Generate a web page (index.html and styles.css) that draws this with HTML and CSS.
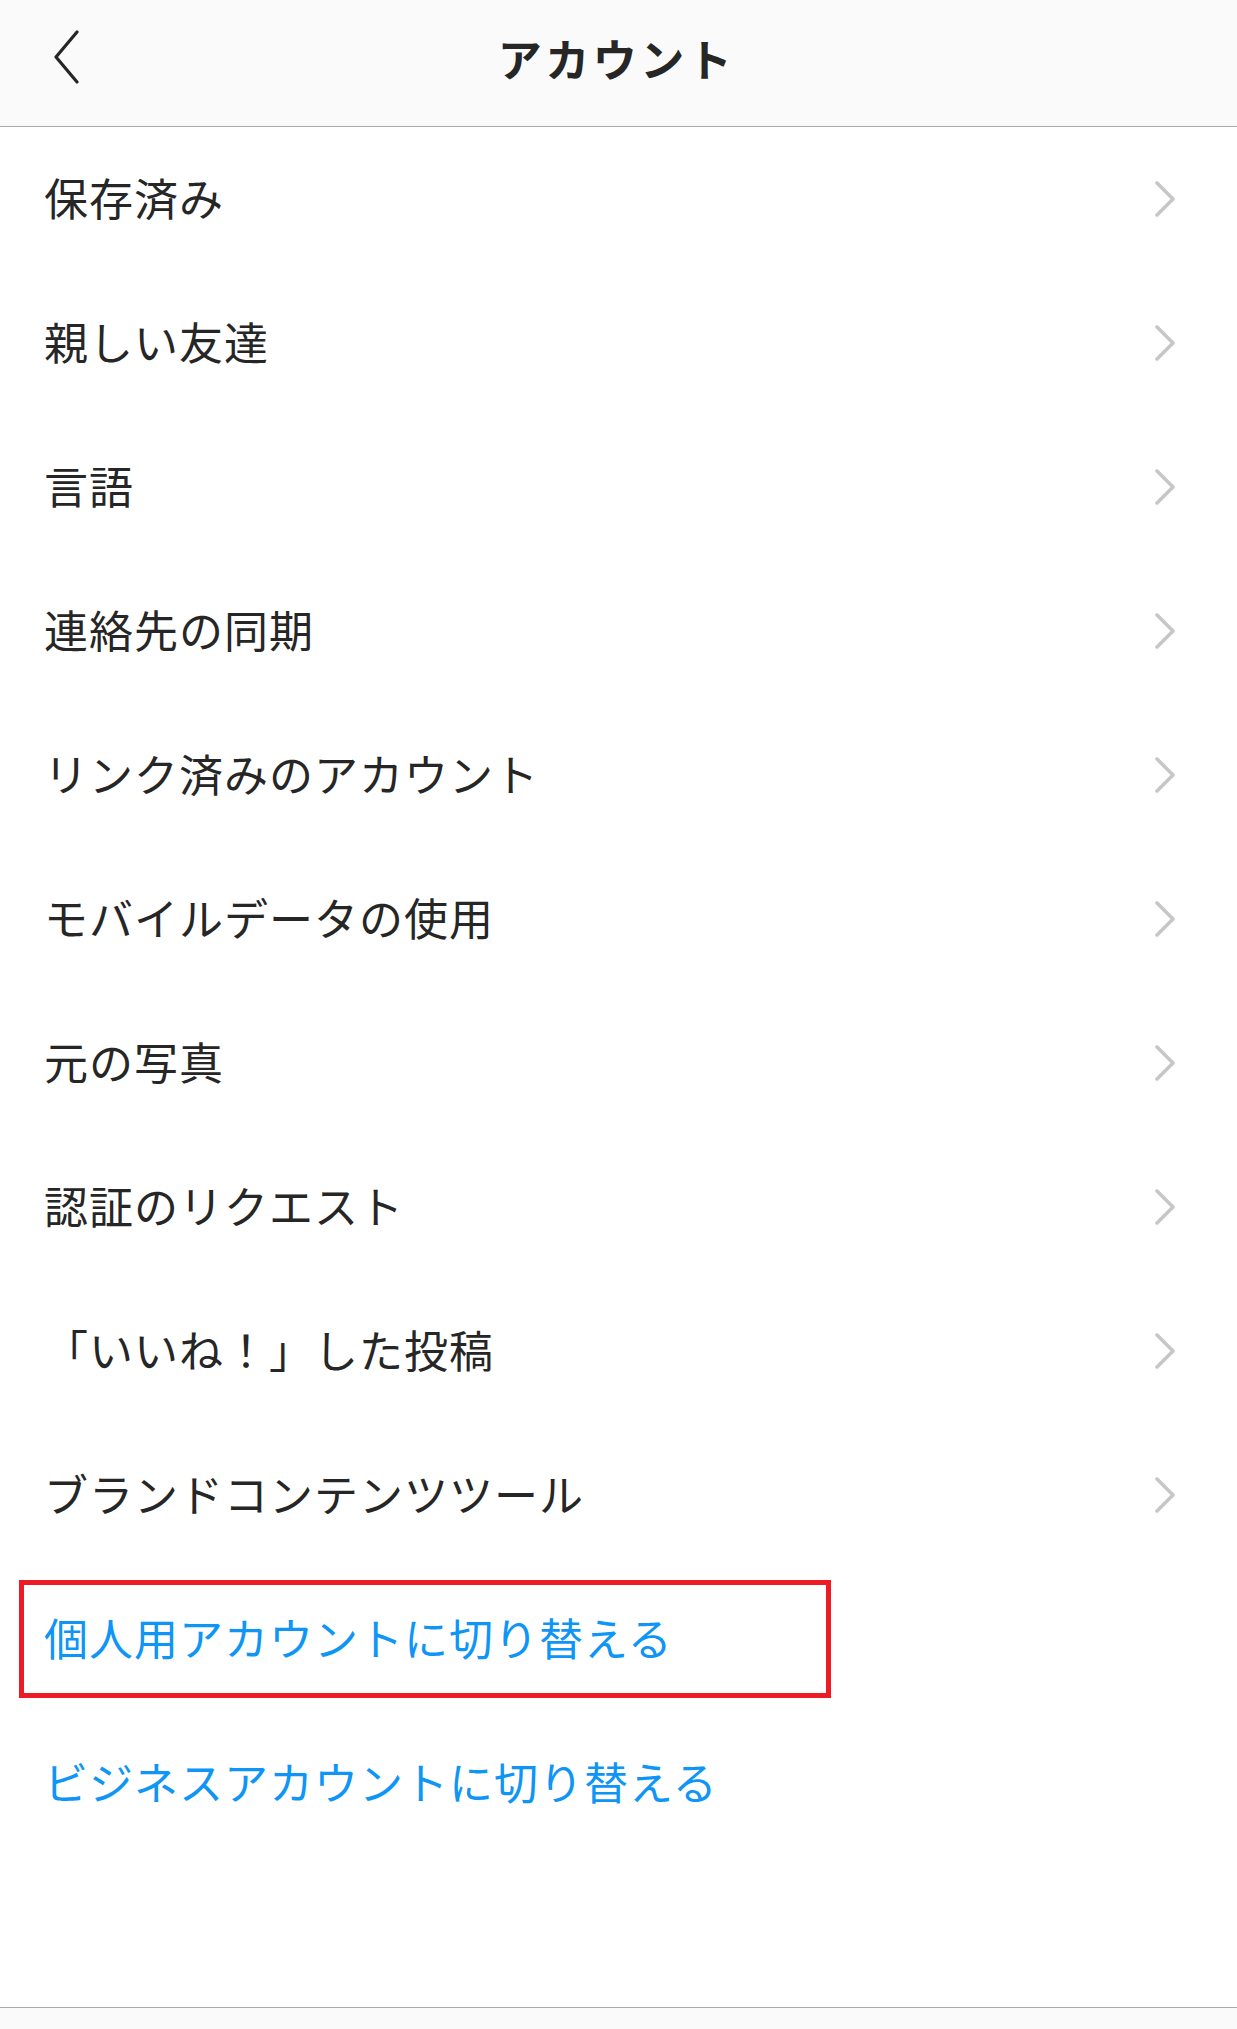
FILE: index.html
```html
<!DOCTYPE html>
<html lang="ja">
<head>
<meta charset="utf-8">
<title>アカウント</title>
<link rel="stylesheet" href="styles.css">
</head>
<body>
<div class="page">
  <header class="topbar">
    <span class="back">
      <svg width="26" height="54" viewBox="0 0 26 54"><path d="M24 2 L3 27 L24 52" fill="none" stroke="#262626" stroke-width="3.2" stroke-linecap="round" stroke-linejoin="round"/></svg>
    </span>
    <h1 class="title">アカウント</h1>
  </header>
  <main class="list">
    <div class="row"><span class="label">保存済み</span><svg class="chev" width="20" height="36" viewBox="0 0 20 36"><path d="M2 2 L18 18 L2 34" fill="none" stroke="#c7c7c7" stroke-width="3.6" stroke-linecap="round" stroke-linejoin="round"/></svg></div>
    <div class="row"><span class="label">親しい友達</span><svg class="chev" width="20" height="36" viewBox="0 0 20 36"><path d="M2 2 L18 18 L2 34" fill="none" stroke="#c7c7c7" stroke-width="3.6" stroke-linecap="round" stroke-linejoin="round"/></svg></div>
    <div class="row"><span class="label">言語</span><svg class="chev" width="20" height="36" viewBox="0 0 20 36"><path d="M2 2 L18 18 L2 34" fill="none" stroke="#c7c7c7" stroke-width="3.6" stroke-linecap="round" stroke-linejoin="round"/></svg></div>
    <div class="row"><span class="label">連絡先の同期</span><svg class="chev" width="20" height="36" viewBox="0 0 20 36"><path d="M2 2 L18 18 L2 34" fill="none" stroke="#c7c7c7" stroke-width="3.6" stroke-linecap="round" stroke-linejoin="round"/></svg></div>
    <div class="row"><span class="label">リンク済みのアカウント</span><svg class="chev" width="20" height="36" viewBox="0 0 20 36"><path d="M2 2 L18 18 L2 34" fill="none" stroke="#c7c7c7" stroke-width="3.6" stroke-linecap="round" stroke-linejoin="round"/></svg></div>
    <div class="row"><span class="label">モバイルデータの使用</span><svg class="chev" width="20" height="36" viewBox="0 0 20 36"><path d="M2 2 L18 18 L2 34" fill="none" stroke="#c7c7c7" stroke-width="3.6" stroke-linecap="round" stroke-linejoin="round"/></svg></div>
    <div class="row"><span class="label">元の写真</span><svg class="chev" width="20" height="36" viewBox="0 0 20 36"><path d="M2 2 L18 18 L2 34" fill="none" stroke="#c7c7c7" stroke-width="3.6" stroke-linecap="round" stroke-linejoin="round"/></svg></div>
    <div class="row"><span class="label">認証のリクエスト</span><svg class="chev" width="20" height="36" viewBox="0 0 20 36"><path d="M2 2 L18 18 L2 34" fill="none" stroke="#c7c7c7" stroke-width="3.6" stroke-linecap="round" stroke-linejoin="round"/></svg></div>
    <div class="row"><span class="label">「いいね！」した投稿</span><svg class="chev" width="20" height="36" viewBox="0 0 20 36"><path d="M2 2 L18 18 L2 34" fill="none" stroke="#c7c7c7" stroke-width="3.6" stroke-linecap="round" stroke-linejoin="round"/></svg></div>
    <div class="row"><span class="label">ブランドコンテンツツール</span><svg class="chev" width="20" height="36" viewBox="0 0 20 36"><path d="M2 2 L18 18 L2 34" fill="none" stroke="#c7c7c7" stroke-width="3.6" stroke-linecap="round" stroke-linejoin="round"/></svg></div>
    <div class="row highlighted"><span class="label link">個人用アカウントに切り替える</span><span class="mark"></span></div>
    <div class="row"><span class="label link">ビジネスアカウントに切り替える</span></div>
  </main>
  <footer class="bottombar"></footer>
</div>
</body>
</html>
```
FILE: styles.css
```css
html, body {
  margin: 0;
  padding: 0;
  background: #ffffff;
}
body {
  font-family: "Noto Sans CJK JP", "Noto Sans", sans-serif;
  color: #262626;
}
.page {
  min-height: 2029px;
  display: flex;
  flex-direction: column;
}
.topbar {
  height: 126px;
  background: #fafafa;
  border-bottom: 1px solid #a9a9a9;
  display: flex;
  align-items: center;
  justify-content: center;
  position: relative;
}
.back {
  position: absolute;
  left: 53px;
  top: 30px;
  width: 26px;
  height: 54px;
  display: block;
}
.back svg { display: block; }
.title {
  margin: 0;
  font-size: 44px;
  font-weight: 700;
  letter-spacing: 3.5px;
  line-height: 1;
  margin-top: -10px;
  margin-right: 4px;
  color: #262626;
}
.list {
  flex: 1;
  display: flex;
  flex-direction: column;
}
.row {
  height: 144px;
  box-sizing: border-box;
  display: flex;
  align-items: center;
  justify-content: space-between;
  padding: 0 62px 4px 44px;
  position: relative;
}
.chev {
  display: block;
  margin-top: 4px;
}
.label {
  font-size: 44px;
  line-height: 1;
  font-weight: 400;
  letter-spacing: 1px;
  color: #262626;
}
.label.link {
  color: #0e95f5;
}
.mark {
  position: absolute;
  left: 19px;
  top: 13px;
  width: 802px;
  height: 108px;
  border: 5px solid #ed1c24;
}
.bottombar {
  height: 21px;
  background: #fafafa;
  border-top: 1px solid #a9a9a9;
}
```
